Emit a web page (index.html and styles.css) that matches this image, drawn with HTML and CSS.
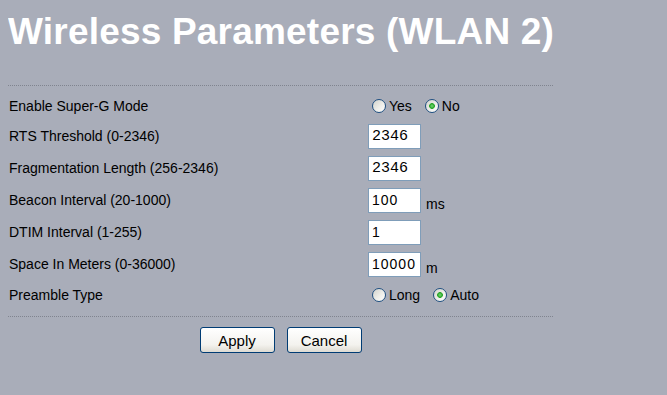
FILE: index.html
```html
<!DOCTYPE html>
<html lang="en">
<head>
    <meta charset="UTF-8">
    <meta name="viewport" content="width=device-width, initial-scale=1.0">
    <title>Wireless Parameters (WLAN 2)</title>
    <link rel="stylesheet" href="styles.css">
</head>
<body>
    <h1 class="title">Wireless Parameters (WLAN 2)</h1>

    <form class="settings" onsubmit="return false">
        <div class="rule"></div>

        <div class="row row-first">
            <span class="label">Enable Super-G Mode</span>
            <span class="control">
                <label class="opt"><input type="radio" name="superg"> Yes</label>
                <label class="opt"><input type="radio" name="superg" checked> No</label>
            </span>
        </div>

        <div class="row">
            <span class="label">RTS Threshold (0-2346)</span>
            <span class="control"><input class="field mono" type="text" value="2346"></span>
        </div>

        <div class="row">
            <span class="label">Fragmentation Length (256-2346)</span>
            <span class="control"><input class="field mono" type="text" value="2346"></span>
        </div>

        <div class="row">
            <span class="label">Beacon Interval (20-1000)</span>
            <span class="control"><input class="field" type="text" value="100"><span class="unit">ms</span></span>
        </div>

        <div class="row">
            <span class="label">DTIM Interval (1-255)</span>
            <span class="control"><input class="field" type="text" value="1"></span>
        </div>

        <div class="row">
            <span class="label">Space In Meters (0-36000)</span>
            <span class="control"><input class="field" type="text" value="10000"><span class="unit">m</span></span>
        </div>

        <div class="row row-last">
            <span class="label">Preamble Type</span>
            <span class="control">
                <label class="opt"><input type="radio" name="preamble"> Long</label>
                <label class="opt"><input type="radio" name="preamble" checked> Auto</label>
            </span>
        </div>

        <div class="rule rule-bottom"></div>

        <div class="actions">
            <button type="submit">Apply</button>
            <button type="reset">Cancel</button>
        </div>
    </form>
</body>
</html>
```

FILE: styles.css
```css
body {
    margin: 8px;
    background: #a9adb9;
    color: #000;
    font-family: "Liberation Sans", Arial, sans-serif;
    font-size: 14px;
}
.title {
    margin: 0;
    padding-top: 3px;
    font-size: 37px;
    line-height: 42px;
    font-weight: bold;
    letter-spacing: 0.2px;
    color: #fff;
}
.settings {
    width: 545px;
    margin-top: 32px;
}
.rule {
    height: 0;
    border-top: 1px dotted #80848f;
}
.rule-bottom {
    margin-top: 6px;
}
.row {
    display: grid;
    grid-template-columns: 360px 1fr;
    align-items: center;
    height: 32px;
}
.row-first {
    height: 34px;
    padding-top: 6px;
    box-sizing: border-box;
}
.row-last {
    height: 30px;
}
.label {
    padding-left: 1px;
    line-height: 16px;
}
.control {
    display: flex;
    align-items: center;
}
.opt {
    display: inline-flex;
    align-items: center;
    gap: 3px;
    margin-right: 9px;
    line-height: 16px;
}
.opt input {
    appearance: none;
    -webkit-appearance: none;
    width: 14px;
    height: 14px;
    margin: 0 0 0 4px;
    border: 1px solid #1f4f80;
    border-radius: 50%;
    background: linear-gradient(135deg, #d2d2cc, #eeeee9 55%, #fff);
    box-sizing: border-box;
}
.opt input:checked {
    background: radial-gradient(circle, #7ad87a 0, #22a322 2.5px, transparent 3.2px),
                linear-gradient(135deg, #d2d2cc, #eeeee9 55%, #fff);
}
.field {
    width: 53px;
    height: 25px;
    box-sizing: border-box;
    margin: 0;
    padding: 0 3px;
    border: 1px solid #7f9db9;
    background: #fff;
    color: #000;
    font-family: "Liberation Sans", Arial, sans-serif;
    font-size: 14px;
    letter-spacing: 1px;
}
.field.mono {
    font-family: "Liberation Mono", "Courier New", monospace;
    font-size: 15px;
    letter-spacing: 0;
}
.unit {
    align-self: flex-end;
    margin-left: 5px;
    margin-bottom: 1px;
    line-height: 16px;
}
.actions {
    display: flex;
    justify-content: center;
    gap: 12px;
    margin-top: 10px;
}
.actions button {
    width: 75px;
    height: 26px;
    padding: 0;
    border: 1px solid #003c74;
    border-radius: 3px;
    background: linear-gradient(#ffffff, #f3f2ee 70%, #dedbd2);
    color: #000;
    font-family: "Liberation Sans", Arial, sans-serif;
    font-size: 15px;
}
```
